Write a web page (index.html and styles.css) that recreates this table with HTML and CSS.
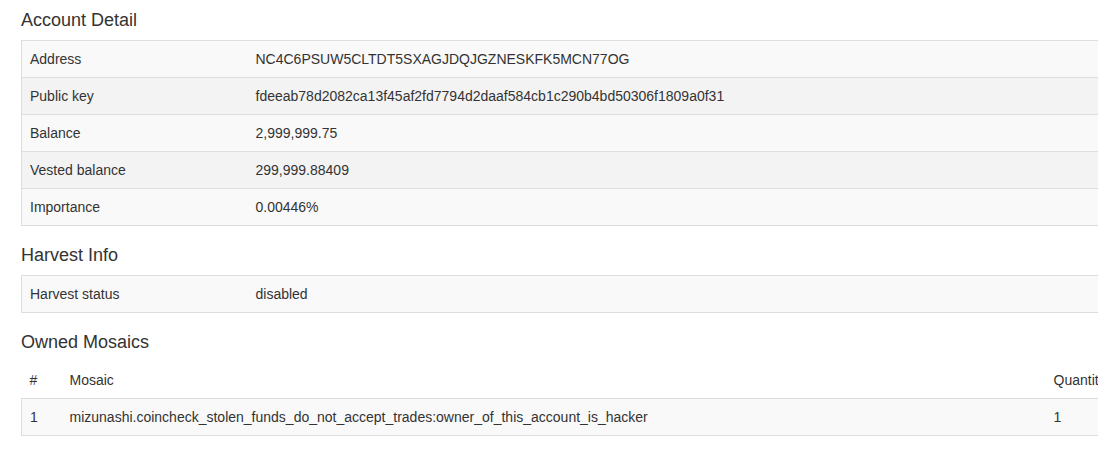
FILE: index.html
```html
<!DOCTYPE html>
<html>
<head>
<meta charset="utf-8">
<link rel="stylesheet" href="styles.css">
</head>
<body>
<div class="page">
  <h4 class="section-title">Account Detail</h4>
  <table class="info-table">
    <colgroup><col class="col-label"><col></colgroup>
    <tbody>
      <tr class="odd"><td>Address</td><td>NC4C6PSUW5CLTDT5SXAGJDQJGZNESKFK5MCN77OG</td></tr>
      <tr class="even"><td>Public key</td><td>fdeeab78d2082ca13f45af2fd7794d2daaf584cb1c290b4bd50306f1809a0f31</td></tr>
      <tr class="odd"><td>Balance</td><td>2,999,999.75</td></tr>
      <tr class="even"><td>Vested balance</td><td>299,999.88409</td></tr>
      <tr class="odd"><td>Importance</td><td>0.00446%</td></tr>
    </tbody>
  </table>

  <h4 class="section-title">Harvest Info</h4>
  <table class="info-table">
    <colgroup><col class="col-label"><col></colgroup>
    <tbody>
      <tr class="odd"><td>Harvest status</td><td>disabled</td></tr>
    </tbody>
  </table>

  <h4 class="section-title">Owned Mosaics</h4>
  <table class="mosaic-table">
    <colgroup><col class="col-num"><col class="col-mosaic"><col></colgroup>
    <thead>
      <tr><th>#</th><th>Mosaic</th><th>Quantity</th></tr>
    </thead>
    <tbody>
      <tr class="odd"><td>1</td><td>mizunashi.coincheck_stolen_funds_do_not_accept_trades:owner_of_this_account_is_hacker</td><td>1</td></tr>
    </tbody>
  </table>
</div>
</body>
</html>
```

FILE: styles.css
```css
html, body {
  margin: 0;
  overflow: hidden;
  background: #fff;
}
body {
  font-family: "Liberation Sans", Arial, sans-serif;
  font-size: 14px;
  line-height: 20px;
  color: #333;
}
.page {
  padding-left: 21px;
  width: 1160px;
}
.section-title {
  font-size: 18px;
  font-weight: normal;
  line-height: 20px;
  margin: 10px 0;
}
.info-table,
.mosaic-table {
  width: 100%;
  border-collapse: collapse;
  table-layout: fixed;
  margin-bottom: 19px;
}
.info-table {
  border-left: 1px solid #ddd;
}
.info-table td,
.mosaic-table td,
.mosaic-table th {
  padding: 8px;
  text-align: left;
  vertical-align: top;
  white-space: nowrap;
}
.info-table td {
  border-top: 1px solid #ddd;
  border-bottom: 1px solid #ddd;
}
.col-label { width: 226px; }
.col-num { width: 40px; }
.col-mosaic { width: 984px; }
.mosaic-table th {
  font-weight: normal;
  border-bottom: 1px solid #ddd;
}
.mosaic-table tbody tr {
  border-left: 1px solid #ddd;
}
.mosaic-table tbody td {
  border-bottom: 1px solid #ddd;
}
.odd { background: #f9f9f9; }
.even { background: #f3f3f3; }
```
